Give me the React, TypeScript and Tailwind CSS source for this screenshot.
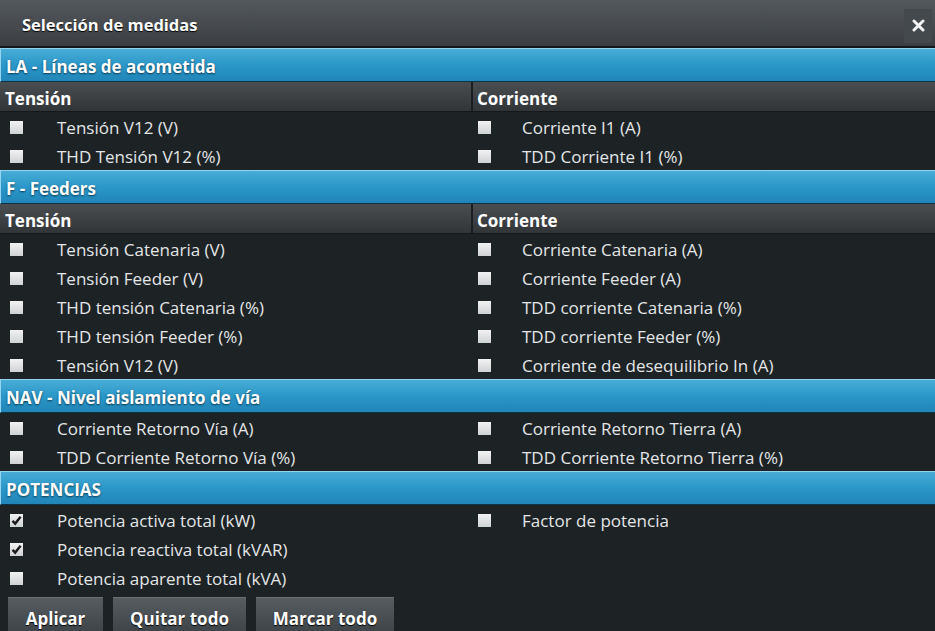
// Measurement selection dialog
type Item = { label: string; checked?: boolean };
type Section = { title: string; sub?: [string, string]; left: Item[]; right: Item[] };

const sections: Section[] = [
  {
    title: "LA - Líneas de acometida",
    sub: ["Tensión", "Corriente"],
    left: [{ label: "Tensión V12 (V)" }, { label: "THD Tensión V12 (%)" }],
    right: [{ label: "Corriente I1 (A)" }, { label: "TDD Corriente I1 (%)" }],
  },
  {
    title: "F - Feeders",
    sub: ["Tensión", "Corriente"],
    left: [
      { label: "Tensión Catenaria (V)" },
      { label: "Tensión Feeder (V)" },
      { label: "THD tensión Catenaria (%)" },
      { label: "THD tensión Feeder (%)" },
      { label: "Tensión V12 (V)" },
    ],
    right: [
      { label: "Corriente Catenaria (A)" },
      { label: "Corriente Feeder (A)" },
      { label: "TDD corriente Catenaria (%)" },
      { label: "TDD corriente Feeder (%)" },
      { label: "Corriente de desequilibrio In (A)" },
    ],
  },
  {
    title: "NAV - Nivel aislamiento de vía",
    left: [{ label: "Corriente Retorno Vía (A)" }, { label: "TDD Corriente Retorno Vía (%)" }],
    right: [{ label: "Corriente Retorno Tierra (A)" }, { label: "TDD Corriente Retorno Tierra (%)" }],
  },
  {
    title: "POTENCIAS",
    left: [
      { label: "Potencia activa total (kW)", checked: true },
      { label: "Potencia reactiva total (kVAR)", checked: true },
      { label: "Potencia aparente total (kVA)" },
    ],
    right: [{ label: "Factor de potencia" }],
  },
];

function Check({ checked }: { checked?: boolean }) {
  return (
    <div className="w-[13px] h-[13px] shrink-0 bg-gradient-to-b from-[#f2f2f2] to-[#cfd2d4] flex items-center justify-center">
      {checked && (
        <svg width="11" height="11" viewBox="0 0 11 11">
          <path d="M1.5 5.8 L4.2 8.6 L9.6 1.8" fill="none" stroke="#1a1a1a" strokeWidth="2.4" />
        </svg>
      )}
    </div>
  );
}

function Row({ item, right }: { item?: Item; right?: boolean }) {
  if (!item) return <div className="h-[29px]" />;
  return (
    <div className={`h-[29px] flex items-center pt-[1px] ${right ? "pl-[7px]" : "pl-[10px]"}`}>
      <Check checked={item.checked} />
      <span className={`text-[17px] leading-none text-[#e4e6e7] ${right ? "ml-[31px]" : "ml-[34px]"}`}>{item.label}</span>
    </div>
  );
}

export default function App() {
  return (
    <div
      className="w-[935px] h-[631px] overflow-hidden bg-[#1d2225] flex flex-col"
      style={{ fontFamily: '"Open Sans", "Noto Sans", sans-serif' }}
    >
      <div className="h-[48px] shrink-0 flex items-center justify-between pt-[5px] bg-gradient-to-b from-[#53585c] to-[#3b3f43] border-b-2 border-[#15181a]">
        <span className="ml-[22px] text-[16.5px] font-bold text-white [text-shadow:0_1px_1px_#000]">Selección de medidas</span>
        <div className="mr-[3px] w-[28px] h-[34px] flex items-center justify-center bg-[#44494d]">
          <svg width="13" height="13" viewBox="0 0 13 13">
            <path d="M2 2 L11 11 M11 2 L2 11" stroke="#f4f4f4" strokeWidth="3" strokeLinecap="round" />
          </svg>
        </div>
      </div>
      {sections.map((s) => {
        const n = Math.max(s.left.length, s.right.length);
        return (
          <div key={s.title} className="shrink-0">
            <div className="h-[34px] flex items-center pl-[5px] pt-[3px] bg-gradient-to-b from-[#48acd6] via-[#2a97c8] to-[#2185b8] border-t border-l border-[#94d4ee] border-b border-b-[#0d3346]">
              <span className="text-[17px] leading-none font-bold text-white [text-shadow:0_1px_2px_#0b3a52]">{s.title}</span>
            </div>
            {s.sub && (
              <div className="h-[30px] grid grid-cols-[471px_1fr] bg-gradient-to-b from-[#4a4e51] to-[#313538] border-b border-[#15181a]">
                <div className="flex items-center pl-[5px] pt-[3px] text-[17px] leading-none font-bold text-white">{s.sub[0]}</div>
                <div className="flex items-center pl-[4px] pt-[3px] border-l-2 border-[#1b1e20] text-[17px] leading-none font-bold text-white">{s.sub[1]}</div>
              </div>
            )}
            <div className="grid grid-cols-[471px_1fr]">
              <div>
                {Array.from({ length: n }).map((_, i) => (
                  <Row key={i} item={s.left[i]} />
                ))}
              </div>
              <div>
                {Array.from({ length: s.right.length }).map((_, i) => (
                  <Row key={i} item={s.right[i]} right />
                ))}
              </div>
            </div>
          </div>
        );
      })}
      <div className="flex gap-[10px] pl-[8px] pt-[5px]">
        {["Aplicar", "Quitar todo", "Marcar todo"].map((b, i) => (
          <div
            key={b}
            className={`h-[38px] flex justify-center pt-[10px] text-[17px] leading-tight font-bold text-white bg-gradient-to-b from-[#575c60] to-[#3d4246] border-t border-[#6a6f73] [text-shadow:0_1px_1px_#000] ${
              i === 0 ? "w-[95px]" : i === 1 ? "w-[133px]" : "w-[138px]"
            }`}
          >
            {b}
          </div>
        ))}
      </div>
    </div>
  );
}
